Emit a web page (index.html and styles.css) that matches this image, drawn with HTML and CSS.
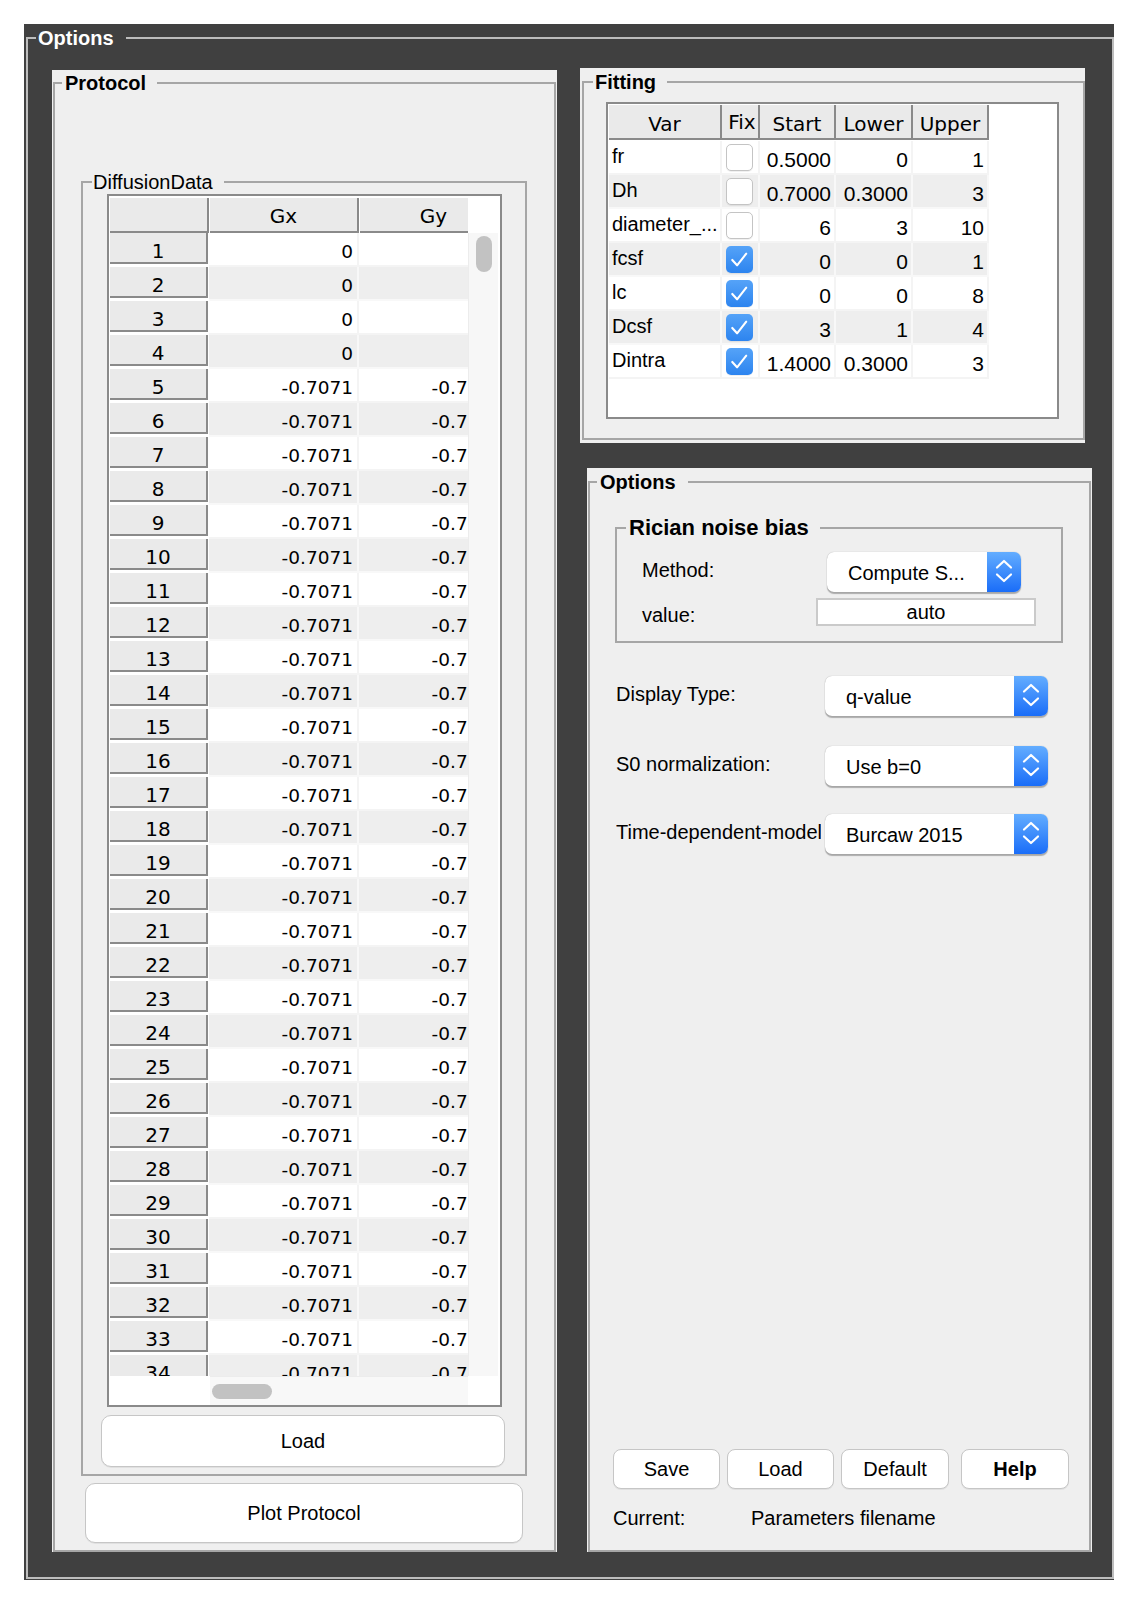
FILE: index.html
```html
<!DOCTYPE html>
<html>
<head>
<meta charset="utf-8">
<link rel="stylesheet" href="styles.css">
</head>
<body>
<div class="outer">
  <fieldset class="grp grp-outer">
    <legend>Options</legend>
    <div class="cols">
      <div class="panel protocol-panel">
        <fieldset class="grp prot">
          <legend>Protocol</legend>
          <fieldset class="grp diff">
            <legend>DiffusionData</legend>
            <div class="dtable">
              <div class="dt-grid">
                <div class="dt-head">
                  <div class="hl"></div>
                  <div class="hc">Gx</div>
                  <div class="hc last">Gy</div>
                </div>
                <div class="dt-corner"></div>
                <div class="dt-body">
                  <div class="r"><div class="rl">1</div><div class="rc">0</div><div class="rc">0</div></div>
                  <div class="r alt"><div class="rl">2</div><div class="rc">0</div><div class="rc">0</div></div>
                  <div class="r"><div class="rl">3</div><div class="rc">0</div><div class="rc">0</div></div>
                  <div class="r alt"><div class="rl">4</div><div class="rc">0</div><div class="rc">0</div></div>
                  <div class="r"><div class="rl">5</div><div class="rc">-0.7071</div><div class="rc">-0.7071</div></div>
                  <div class="r alt"><div class="rl">6</div><div class="rc">-0.7071</div><div class="rc">-0.7071</div></div>
                  <div class="r"><div class="rl">7</div><div class="rc">-0.7071</div><div class="rc">-0.7071</div></div>
                  <div class="r alt"><div class="rl">8</div><div class="rc">-0.7071</div><div class="rc">-0.7071</div></div>
                  <div class="r"><div class="rl">9</div><div class="rc">-0.7071</div><div class="rc">-0.7071</div></div>
                  <div class="r alt"><div class="rl">10</div><div class="rc">-0.7071</div><div class="rc">-0.7071</div></div>
                  <div class="r"><div class="rl">11</div><div class="rc">-0.7071</div><div class="rc">-0.7071</div></div>
                  <div class="r alt"><div class="rl">12</div><div class="rc">-0.7071</div><div class="rc">-0.7071</div></div>
                  <div class="r"><div class="rl">13</div><div class="rc">-0.7071</div><div class="rc">-0.7071</div></div>
                  <div class="r alt"><div class="rl">14</div><div class="rc">-0.7071</div><div class="rc">-0.7071</div></div>
                  <div class="r"><div class="rl">15</div><div class="rc">-0.7071</div><div class="rc">-0.7071</div></div>
                  <div class="r alt"><div class="rl">16</div><div class="rc">-0.7071</div><div class="rc">-0.7071</div></div>
                  <div class="r"><div class="rl">17</div><div class="rc">-0.7071</div><div class="rc">-0.7071</div></div>
                  <div class="r alt"><div class="rl">18</div><div class="rc">-0.7071</div><div class="rc">-0.7071</div></div>
                  <div class="r"><div class="rl">19</div><div class="rc">-0.7071</div><div class="rc">-0.7071</div></div>
                  <div class="r alt"><div class="rl">20</div><div class="rc">-0.7071</div><div class="rc">-0.7071</div></div>
                  <div class="r"><div class="rl">21</div><div class="rc">-0.7071</div><div class="rc">-0.7071</div></div>
                  <div class="r alt"><div class="rl">22</div><div class="rc">-0.7071</div><div class="rc">-0.7071</div></div>
                  <div class="r"><div class="rl">23</div><div class="rc">-0.7071</div><div class="rc">-0.7071</div></div>
                  <div class="r alt"><div class="rl">24</div><div class="rc">-0.7071</div><div class="rc">-0.7071</div></div>
                  <div class="r"><div class="rl">25</div><div class="rc">-0.7071</div><div class="rc">-0.7071</div></div>
                  <div class="r alt"><div class="rl">26</div><div class="rc">-0.7071</div><div class="rc">-0.7071</div></div>
                  <div class="r"><div class="rl">27</div><div class="rc">-0.7071</div><div class="rc">-0.7071</div></div>
                  <div class="r alt"><div class="rl">28</div><div class="rc">-0.7071</div><div class="rc">-0.7071</div></div>
                  <div class="r"><div class="rl">29</div><div class="rc">-0.7071</div><div class="rc">-0.7071</div></div>
                  <div class="r alt"><div class="rl">30</div><div class="rc">-0.7071</div><div class="rc">-0.7071</div></div>
                  <div class="r"><div class="rl">31</div><div class="rc">-0.7071</div><div class="rc">-0.7071</div></div>
                  <div class="r alt"><div class="rl">32</div><div class="rc">-0.7071</div><div class="rc">-0.7071</div></div>
                  <div class="r"><div class="rl">33</div><div class="rc">-0.7071</div><div class="rc">-0.7071</div></div>
                  <div class="r alt"><div class="rl">34</div><div class="rc">-0.7071</div><div class="rc">-0.7071</div></div>
                  <div class="r"><div class="rl">35</div><div class="rc">-0.7071</div><div class="rc">-0.7071</div></div>
                </div>
                <div class="vscroll"><div class="vthumb"></div></div>
                <div class="hscroll"><div class="hs-left"></div><div class="hs-track"><div class="hthumb"></div></div></div>
                <div class="dt-corner"></div>
              </div>
            </div>
            <button class="btn btn-load">Load</button>
          </fieldset>
          <button class="btn btn-plot">Plot Protocol</button>
        </fieldset>
      </div>

      <div class="rightcol">
        <div class="panel fitting-panel">
          <fieldset class="grp fit">
            <legend>Fitting</legend>
            <div class="ftable">
              <div class="fh">
                <div class="fhc c1">Var</div>
                <div class="fhc c2">Fix</div>
                <div class="fhc c3">Start</div>
                <div class="fhc c4">Lower</div>
                <div class="fhc c5">Upper</div>
              </div>
              <div class="fbody">
                <div class="fr"><div class="fc c1 fv">fr</div><div class="fc c2"><span class="cb"></span></div><div class="fc c3 fn">0.5000</div><div class="fc c4 fn">0</div><div class="fc c5 fn">1</div></div>
                <div class="fr alt"><div class="fc c1 fv">Dh</div><div class="fc c2"><span class="cb"></span></div><div class="fc c3 fn">0.7000</div><div class="fc c4 fn">0.3000</div><div class="fc c5 fn">3</div></div>
                <div class="fr"><div class="fc c1 fv">diameter_...</div><div class="fc c2"><span class="cb"></span></div><div class="fc c3 fn">6</div><div class="fc c4 fn">3</div><div class="fc c5 fn">10</div></div>
                <div class="fr alt"><div class="fc c1 fv">fcsf</div><div class="fc c2"><span class="cb on"><svg viewBox="0 0 28 28" width="28" height="28"><path d="M6.5 14.5 L11.5 20 L21 8" fill="none" stroke="#fff" stroke-width="2.2" stroke-linecap="round" stroke-linejoin="round"/></svg></span></div><div class="fc c3 fn">0</div><div class="fc c4 fn">0</div><div class="fc c5 fn">1</div></div>
                <div class="fr"><div class="fc c1 fv">lc</div><div class="fc c2"><span class="cb on"><svg viewBox="0 0 28 28" width="28" height="28"><path d="M6.5 14.5 L11.5 20 L21 8" fill="none" stroke="#fff" stroke-width="2.2" stroke-linecap="round" stroke-linejoin="round"/></svg></span></div><div class="fc c3 fn">0</div><div class="fc c4 fn">0</div><div class="fc c5 fn">8</div></div>
                <div class="fr alt"><div class="fc c1 fv">Dcsf</div><div class="fc c2"><span class="cb on"><svg viewBox="0 0 28 28" width="28" height="28"><path d="M6.5 14.5 L11.5 20 L21 8" fill="none" stroke="#fff" stroke-width="2.2" stroke-linecap="round" stroke-linejoin="round"/></svg></span></div><div class="fc c3 fn">3</div><div class="fc c4 fn">1</div><div class="fc c5 fn">4</div></div>
                <div class="fr"><div class="fc c1 fv">Dintra</div><div class="fc c2"><span class="cb on"><svg viewBox="0 0 28 28" width="28" height="28"><path d="M6.5 14.5 L11.5 20 L21 8" fill="none" stroke="#fff" stroke-width="2.2" stroke-linecap="round" stroke-linejoin="round"/></svg></span></div><div class="fc c3 fn">1.4000</div><div class="fc c4 fn">0.3000</div><div class="fc c5 fn">3</div></div>
              </div>
            </div>
          </fieldset>
        </div>

        <div class="panel options-panel">
          <fieldset class="grp opts">
            <legend>Options</legend>
            <div class="opt-inner">
              <fieldset class="grp rician">
                <legend>Rician noise bias</legend>
                <div class="rn-row rn-method">
                  <div class="rn-label">Method:</div>
                  <div class="popup w194"><span class="pt">Compute S...</span><span class="pa"><svg width="34" height="40" viewBox="0 0 34 40"><path d="M10 15.5 L17 9 L24 15.5 M10 22.5 L17 29 L24 22.5" fill="none" stroke="#fff" stroke-width="2.2" stroke-linecap="round" stroke-linejoin="round"/></svg></span></div>
                </div>
                <div class="rn-row rn-value">
                  <div class="rn-label lbl-value">value:</div>
                  <div class="edit">auto</div>
                </div>
              </fieldset>

              <div class="orow first">
                <div class="olabel">Display Type:</div>
                <div class="popup w223"><span class="pt">q-value</span><span class="pa"><svg width="34" height="40" viewBox="0 0 34 40"><path d="M10 15.5 L17 9 L24 15.5 M10 22.5 L17 29 L24 22.5" fill="none" stroke="#fff" stroke-width="2.2" stroke-linecap="round" stroke-linejoin="round"/></svg></span></div>
              </div>
              <div class="orow second">
                <div class="olabel">S0 normalization:</div>
                <div class="popup w223"><span class="pt">Use b=0</span><span class="pa"><svg width="34" height="40" viewBox="0 0 34 40"><path d="M10 15.5 L17 9 L24 15.5 M10 22.5 L17 29 L24 22.5" fill="none" stroke="#fff" stroke-width="2.2" stroke-linecap="round" stroke-linejoin="round"/></svg></span></div>
              </div>
              <div class="orow third">
                <div class="olabel clip">Time-dependent-model:</div>
                <div class="popup w223"><span class="pt">Burcaw 2015</span><span class="pa"><svg width="34" height="40" viewBox="0 0 34 40"><path d="M10 15.5 L17 9 L24 15.5 M10 22.5 L17 29 L24 22.5" fill="none" stroke="#fff" stroke-width="2.2" stroke-linecap="round" stroke-linejoin="round"/></svg></span></div>
              </div>

              <div class="opt-bottom">
                <div class="btn-row">
                  <button class="btn sbtn b-save">Save</button>
                  <button class="btn sbtn b-load">Load</button>
                  <button class="btn sbtn b-default">Default</button>
                  <button class="btn sbtn b-help">Help</button>
                </div>
                <div class="current"><span class="cur-label">Current:</span><span>Parameters filename</span></div>
              </div>
            </div>
          </fieldset>
        </div>
      </div>
    </div>
  </fieldset>
</div>
</body>
</html>
```

FILE: styles.css
```css
* { box-sizing: border-box; }
html, body { margin: 0; padding: 0; background: #ffffff; }
body {
  font-family: "Liberation Sans", Arial, sans-serif;
  font-size: 20px;
  color: #000;
}

/* ---------- group boxes ---------- */
fieldset.grp {
  margin: 0;
  padding: 0;
  border: 2px solid #a6a6a6;
  min-width: 0;
}
fieldset.grp > legend {
  padding: 0;
  line-height: 24px;
  font-size: 20px;
  white-space: nowrap;
}

.outer {
  margin: 24px 0 0 24px;
  width: 1090px;
  height: 1556px;
  background: #404040;
  padding: 2px 0 0 2px;
}
.grp-outer {
  width: 1088px;
  height: 1553px;
  border-color: #bdbdbd !important;
}
.grp-outer > legend {
  color: #fff;
  font-weight: bold;
  margin-left: 8px;
  padding: 0 12px 0 2px !important;
}

.cols {
  display: flex;
  align-items: flex-start;
  padding: 18px 0 0 24px;
}

.panel { background: #efefef; }

/* ---------- Protocol ---------- */
.protocol-panel {
  width: 505px;
  height: 1482px;
  margin-top: 2px;
  padding: 1px 1px 0 1px;
}
.prot { width: 503px; height: 1481px; }
.prot > legend {
  font-weight: bold;
  margin-left: 7px;
  padding: 0 11px 0 3px !important;
}
.diff {
  margin: 75px 0 0 26px !important;
  width: 446px;
  height: 1306px;
}
.diff > legend {
  margin-left: 9px;
  padding: 0 11px 0 1px !important;
}

.dtable {
  margin-left: 24px;
  width: 395px;
  height: 1213px;
  border: 2px solid #8a8a8a;
  background: #fff;
  padding: 2px 0 0 1px;
}
.dt-grid {
  display: grid;
  grid-template-columns: 358px 30px;
  grid-template-rows: 35px 1143px 29px;
}
.dt-head {
  display: flex;
  overflow: hidden;
  font-family: "DejaVu Sans", sans-serif;
  font-size: 20px;
}
.hl, .hc, .fhc {
  flex: none;
  height: 35px;
  background: #eaeaea;
  border-right: 2px solid #8a8a8a;
  border-bottom: 2px solid #8a8a8a;
  text-align: center;
  padding-top: 4px;
  line-height: 29px;
}
.hl { width: 99px; margin-right: 1px; }
.hc { width: 149px; margin-right: 1px; }
.dt-corner { background: #fff; }

.dt-body {
  overflow: hidden;
  font-family: "DejaVu Sans", sans-serif;
}
.r {
  display: flex;
  height: 34px;
}
.rl {
  flex: none;
  width: 98px;
  height: 31px;
  margin-right: 1px;
  background: #eaeaea;
  border-right: 2px solid #8a8a8a;
  border-bottom: 2px solid #8a8a8a;
  text-align: center;
  font-size: 20px;
  padding-top: 8px;
  line-height: 21px;
}
.rc {
  flex: none;
  width: 150px;
  height: 34px;
  background: #fff;
  border-right: 2px solid #f4f4f4;
  border-bottom: 2px solid #f4f4f4;
  text-align: right;
  font-size: 18.5px;
  padding: 3px 4px 0 0;
  line-height: 31px;
  white-space: nowrap;
}
.r.alt .rc { background: #eeeeee; border-color: #f8f8f8; }

.vscroll {
  background: #f7f7f7;
  border-left: 1px solid #ececec;
  padding: 3px 0 0 7px;
}
.vthumb {
  width: 16px;
  height: 36px;
  border-radius: 8px;
  background: #c2c2c2;
}
.hscroll { display: flex; }
.hs-left { width: 100px; background: #fff; }
.hs-track {
  flex: 1;
  background: #f8f8f8;
  border-top: 1px solid #ececec;
  padding: 7px 0 0 2px;
}
.hthumb {
  width: 60px;
  height: 15px;
  border-radius: 8px;
  background: #c2c2c2;
}

/* ---------- buttons ---------- */
.btn {
  display: block;
  background: #fff;
  border: 1.5px solid #c6c6c6;
  border-radius: 10px;
  font-family: "Liberation Sans", Arial, sans-serif;
  font-size: 20px;
  color: #000;
  padding: 0;
  box-shadow: 0 1px 0 rgba(0, 0, 0, 0.06);
}
.btn-load {
  margin: 8px 0 0 18px;
  width: 404px;
  height: 52px;
}
.btn-plot {
  margin: 7px 0 0 30px;
  width: 438px;
  height: 60px;
}

/* ---------- right column ---------- */
.rightcol { margin-left: 23px; }

.fitting-panel {
  width: 505px;
  height: 375px;
  padding: 2px 0 3px 2px;
}
.fit { width: 503px; height: 370px; }
.fit > legend {
  font-weight: bold;
  margin-left: 9px;
  padding: 0 11px 0 2px !important;
}
.ftable {
  margin: 8px 0 0 22px;
  width: 453px;
  height: 317px;
  border: 2px solid #8a8a8a;
  background: #fff;
  padding: 1px 0 0 1px;
}
.fh {
  display: flex;
  font-family: "DejaVu Sans", sans-serif;
  font-size: 20px;
}
.c1 { width: 113px; }
.c2 { width: 38px; }
.c3 { width: 76px; }
.c4 { width: 77px; }
.c5 { width: 76px; }
.fhc { padding-top: 5px; }
.fbody { margin-top: 1px; }
.fr { display: flex; height: 34px; }
.fc {
  flex: none;
  height: 34px;
  background: #fff;
  border-right: 2px solid #f4f4f4;
  border-bottom: 2px solid #f4f4f4;
  white-space: nowrap;
  overflow: hidden;
}
.fr.alt .fc { background: #eeeeee; border-color: #f8f8f8; }
.fv {
  padding-left: 3px;
  line-height: 31px;
  font-size: 20px;
}
.fn {
  text-align: right;
  padding: 3px 3px 0 0;
  line-height: 31px;
  font-size: 21px;
}
.c2 { padding: 3px 0 0 4px; }
.cb {
  display: block;
  width: 27px;
  height: 27px;
  border-radius: 5px;
  background: #fff;
  border: 1.5px solid #c4c4c4;
  box-shadow: 0 1px 0 rgba(0, 0, 0, 0.06);
}
.cb.on {
  border: none;
  background: linear-gradient(#55a3f8, #2d84ef);
}
.cb svg { display: block; width: 27px; height: 27px; }

.options-panel {
  width: 505px;
  height: 1084px;
  margin: 25px 0 0 7px;
  padding: 2px 1px 0 1px;
}
.opts { width: 503px; height: 1082px; }
.opts > legend {
  font-weight: bold;
  margin-left: 7px;
  padding: 0 12px 0 3px !important;
}
.opt-inner {
  height: 1056px;
  display: flex;
  flex-direction: column;
}
.rician {
  flex: none;
  margin: 21px 0 0 25px !important;
  width: 448px;
  height: 128px;
}
.rician > legend {
  font-weight: bold;
  font-size: 22px !important;
  line-height: 26px !important;
  margin-left: 9px;
  padding: 0 11px 0 3px !important;
}
.rn-row { display: flex; padding-left: 25px; }
.rn-method { margin-top: 11px; height: 40px; }
.rn-value { margin-top: 6px; height: 28px; }
.rn-label { line-height: 36px; }
.rn-method .rn-label { width: 185px; }
.rn-value .rn-label { width: 174px; line-height: 28px; padding-top: 3px; }
.edit {
  width: 220px;
  height: 28px;
  border: 2px solid #cacaca;
  background: #fff;
  text-align: center;
  line-height: 23px;
  padding-top: 1px;
}

.popup {
  flex: none;
  display: flex;
  height: 40px;
  background: #fff;
  border-radius: 7px;
  box-shadow: 0 1.5px 1px rgba(0, 0, 0, 0.28), 0 0 1px rgba(0, 0, 0, 0.3);
}
.w194 { width: 194px; }
.w223 { width: 223px; }
.pt {
  flex: 1;
  padding: 1px 0 0 21px;
  line-height: 40px;
  white-space: nowrap;
  overflow: hidden;
}
.pa {
  flex: none;
  width: 34px;
  height: 40px;
  border-radius: 0 7px 7px 0;
  background: linear-gradient(#63adff, #1a6df8);
}
.pa svg { display: block; }

.orow {
  flex: none;
  display: flex;
  height: 40px;
  padding-left: 26px;
}
.orow.first { margin-top: 33px; }
.orow.second { margin-top: 30px; }
.orow.third { margin-top: 28px; }
.olabel {
  width: 209px;
  line-height: 37px;
  white-space: nowrap;
  overflow: hidden;
}
.olabel.clip {
  width: 205px;
  margin-right: 4px;
}

.opt-bottom {
  margin-top: auto;
  padding: 0 0 20px 23px;
}
.btn-row { display: flex; height: 40px; }
.sbtn {
  height: 40px;
  border-radius: 8px;
}
.b-save { width: 107px; margin-right: 7px; }
.b-load { width: 107px; margin-right: 7px; }
.b-default { width: 108px; margin-right: 12px; }
.b-help { width: 108px; font-weight: bold; }
.current {
  margin-top: 17px;
  height: 24px;
  line-height: 24px;
  display: flex;
}
.cur-label { width: 138px; }
```
